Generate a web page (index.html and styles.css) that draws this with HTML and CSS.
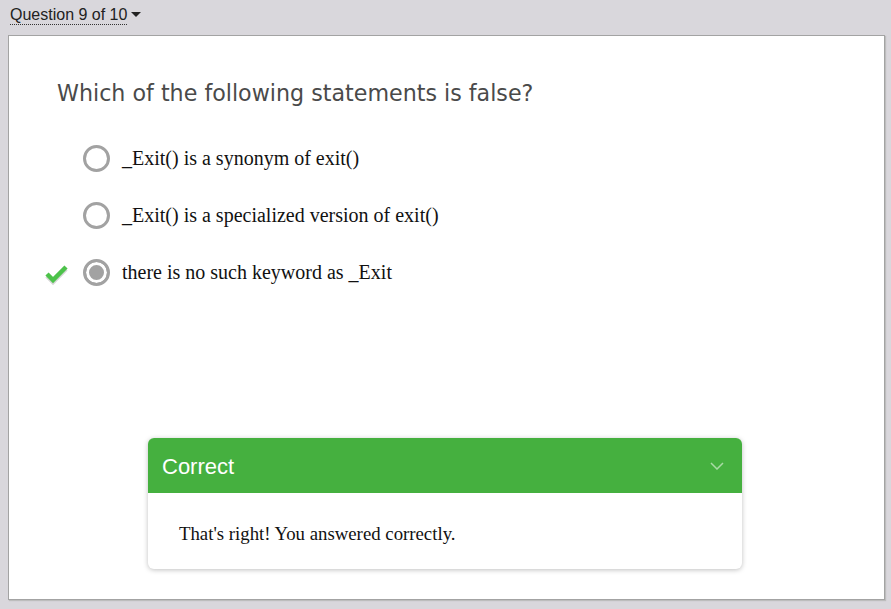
FILE: index.html
```html
<!DOCTYPE html>
<html>
<head>
<meta charset="utf-8">
<link rel="stylesheet" href="styles.css">
</head>
<body>
<div class="topbar">
  <span class="qnum">Question 9 of 10</span><span class="caret"></span>
</div>
<div class="panel">
  <div class="question">Which of the following statements is false?</div>
  <div class="options">
    <div class="option">
      <span class="mark"></span>
      <span class="radio"></span>
      <span class="label">_Exit() is a synonym of exit()</span>
    </div>
    <div class="option">
      <span class="mark"></span>
      <span class="radio"></span>
      <span class="label">_Exit() is a specialized version of exit()</span>
    </div>
    <div class="option">
      <span class="mark">
        <svg width="26" height="22" viewBox="0 0 26 22">
          <path d="M3 12 L9 18 L22 5" fill="none" stroke="#d6d6d6" stroke-width="4.5"/>
          <path d="M3 10 L9 16 L22 3" fill="none" stroke="#4cc24a" stroke-width="4.5"/>
        </svg>
      </span>
      <span class="radio checked"></span>
      <span class="label">there is no such keyword as _Exit</span>
    </div>
  </div>
  <div class="feedback">
    <div class="fb-head">
      <span class="fb-title">Correct</span>
      <svg class="chev" width="14" height="8" viewBox="0 0 14 8"><path d="M1 1 L7 7 L13 1" fill="none" stroke="#a9dba5" stroke-width="1.5"/></svg>
    </div>
    <div class="fb-body">That's right! You answered correctly.</div>
  </div>
</div>
</body>
</html>
```
FILE: styles.css
```css
html, body {
  margin: 0;
  padding: 0;
}
body {
  background: #d9d7dc;
  width: 891px;
  height: 609px;
  overflow: hidden;
  font-family: "Liberation Sans", Arial, sans-serif;
}
.topbar {
  height: 35px;
  padding-left: 10px;
  box-sizing: border-box;
  padding-top: 5px;
  display: flex;
  align-items: flex-start;
}
.qnum {
  font-size: 16px;
  color: #222;
  line-height: 19px;
  border-bottom: 1px dotted #333;
}
.caret {
  width: 0;
  height: 0;
  border-left: 5px solid transparent;
  border-right: 5px solid transparent;
  border-top: 5px solid #222;
  margin-left: 4px;
  margin-top: 7px;
}
.panel {
  margin-left: 8px;
  width: 875px;
  height: 563px;
  background: #fff;
  border: 1px solid #a3a3a3;
  box-shadow: 1px 1px 1px #bdbdbd;
  position: relative;
  box-sizing: content-box;
}
.question {
  font-family: "DejaVu Sans", Verdana, sans-serif;
  font-size: 22.2px;
  color: #4a4a4a;
  padding: 43px 0 0 48px;
  line-height: 28px;
}
.options {
  margin-top: 38px;
  display: flex;
  flex-direction: column;
  gap: 30px;
}
.option {
  display: flex;
  align-items: center;
  height: 27px;
}
.mark {
  width: 26px;
  height: 22px;
  margin-left: 35px;
  display: flex;
  align-items: center;
  margin-top: 4px;
}
.radio {
  width: 21px;
  height: 21px;
  border: 3px solid #a2a2a2;
  border-radius: 50%;
  margin-left: 13px;
  box-sizing: content-box;
  background: #fff;
}
.radio.checked {
  background: #a2a2a2;
  box-shadow: inset 0 0 0 3px #fff;
}
.label {
  font-family: "Liberation Serif", "Times New Roman", serif;
  font-size: 20px;
  color: #111;
  margin-left: 12px;
}
.feedback {
  position: absolute;
  left: 139px;
  top: 402px;
  width: 594px;
  height: 131px;
  border-radius: 6px;
  background: #fff;
  box-shadow: 0 1px 5px rgba(0,0,0,0.25);
  overflow: hidden;
}
.fb-head {
  background: #45b03f;
  height: 55px;
  display: flex;
  align-items: center;
  justify-content: space-between;
  padding: 3px 18px 0 14px;
  box-sizing: border-box;
}
.fb-title {
  color: #fff;
  font-size: 22px;
}
.chev {
  margin-top: -3px;
}
.fb-body {
  font-family: "Liberation Serif", "Times New Roman", serif;
  font-size: 18.8px;
  color: #111;
  padding: 30px 0 0 31px;
}
```
